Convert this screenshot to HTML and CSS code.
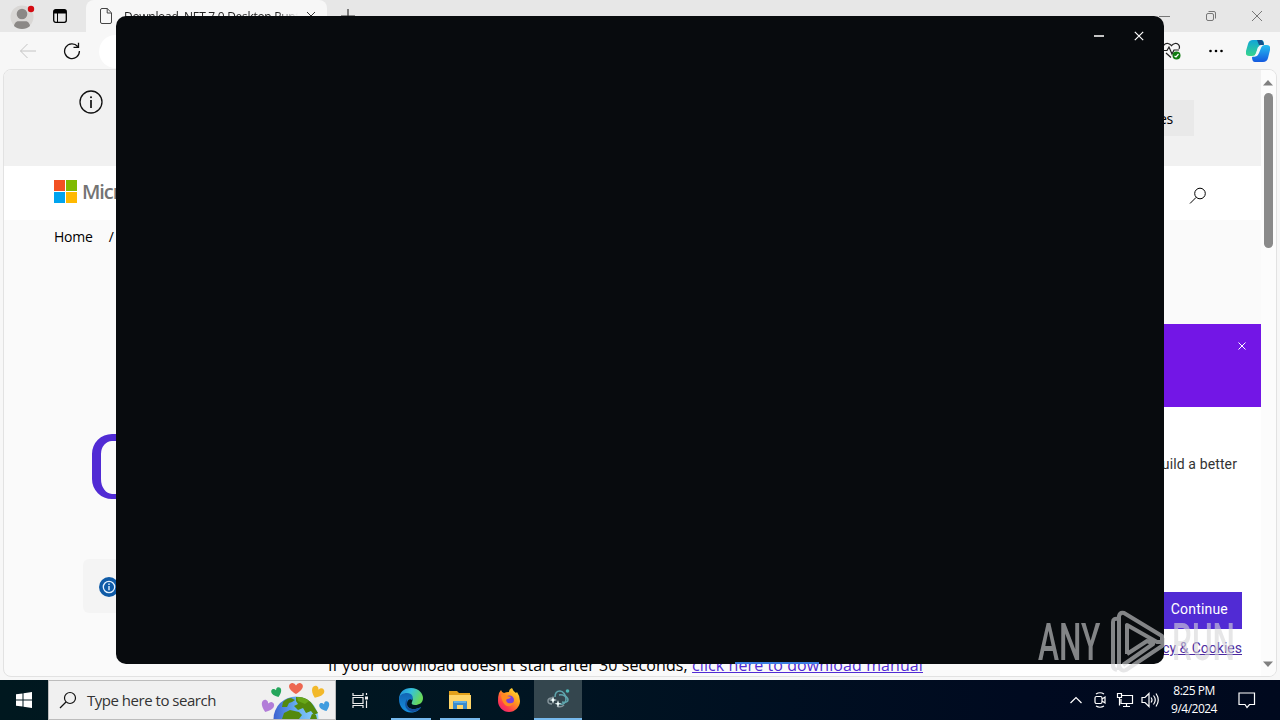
FILE: index.html
```html
<!DOCTYPE html>
<html lang="en">
<head>
    <meta charset="UTF-8">
    <meta name="viewport" content="width=device-width, initial-scale=1.0">
    <title>Desktop</title>
    <link rel="stylesheet" href="styles.css">
</head>
<body>
    <div class="desktop">
        <div class="browser">
            <div class="tabbar">
                <svg class="avatar" width="26" height="28" viewBox="0 0 26 28">
                    <circle cx="12" cy="14" r="11.5" fill="#d9d7d5"/>
                    <circle cx="12" cy="11" r="5.3" fill="#8b8886"/>
                    <path d="M4 23c1-8 15-8 16 0-4 4-12 4-16 0z" fill="#8b8886"/>
                    <path d="M4 17.500h16" stroke="#d9d7d5" stroke-width="1.500"/>
                    <circle cx="21" cy="6" r="3.2" fill="#d40b12"/>
                </svg>
                <svg class="workspaces" width="14" height="14" viewBox="0 0 14 14">
                    <rect x=".7" y=".7" width="12.6" height="12.6" rx="2" fill="none" stroke="#000" stroke-width="1.3"/>
                    <path d="M1 1h12v3.5H1zM4 4h1v9H4z"/>
                </svg>
                <div class="tab">
                    <svg width="12" height="16" viewBox="0 0 12 16" fill="none" stroke="#444">
                        <path d="M.5 2Q.5.5 2 .5h5.2l4.3 4.3V14q0 1.500-1.500 1.500H2Q.5 15.500.5 14zM7.200.5V5h4.300"/>
                    </svg>
                    <span class="tab-title">Download .NET 7.0 Desktop Runt</span>
                    <svg width="10" height="10" viewBox="0 0 10 10" stroke="#333"><path d="M1 1l8 8M9 1L1 9"/></svg>
                </div>
                <svg class="new-tab" width="14" height="14" viewBox="0 0 14 14" stroke="#333"><path d="M7 0v14M0 7h14" stroke-width="1.200"/></svg>
                <div class="window-buttons">
                    <svg width="12" height="12" viewBox="0 0 12 12" stroke="#777"><path d="M0 6.500h11"/></svg>
                    <svg width="12" height="12" viewBox="0 0 12 12" stroke="#777" fill="none"><rect x="1.500" y="3.500" width="7" height="7" rx="1.500"/><path d="M3.500 1.500H9q1.500 0 1.500 1.500v5.500"/></svg>
                    <svg width="12" height="12" viewBox="0 0 12 12" stroke="#777"><path d="M1 1l10 10M11 1L1 11"/></svg>
                </div>
            </div>
            <div class="toolbar">
                <svg width="18" height="16" viewBox="0 0 18 16" fill="none" stroke="#c4c4c4"><path d="M17 8H1.500M8.500 1l-7 7 7 7"/></svg>
                <svg class="reload" width="18" height="18" viewBox="0 0 18 18" fill="none" stroke="#111" stroke-width="1.300"><path d="M14.700 4.500A7.400 7.400 0 1 0 16.400 9M15.500.8v4.500h-5"/></svg>
                <div class="address"></div>
                <svg class="health" width="20" height="18" viewBox="0 0 20 18" fill="none" stroke="#222" stroke-width="1.200">
                    <path d="M1.500 7C0 4 3 1 6 1.500q2 .3 3.500 2.200Q11 1.800 13 1.500c3-.5 5.500 2.500 4 5.500M0 8.500h5l2-3.500 3 7 2-4h5M4 11l5 4.500"/>
                    <circle cx="14.500" cy="13.500" r="4" fill="#107c10" stroke="none"/>
                    <path d="M12.500 14l1.500 1 2.500-3" stroke="#fff"/>
                </svg>
                <svg class="dots" width="14" height="4" viewBox="0 0 14 4"><circle cx="1.500" cy="2" r="1.300"/><circle cx="7" cy="2" r="1.300"/><circle cx="12.500" cy="2" r="1.300"/></svg>
                <svg class="copilot" width="24" height="22" viewBox="0 0 24 22">
                    <defs>
                        <linearGradient id="cpA" x1="0" y1="0" x2="0" y2="1"><stop offset="0" stop-color="#11a5d8"/><stop offset="1" stop-color="#37d58c"/></linearGradient>
                        <linearGradient id="cpB" x1="0" y1="0" x2="0" y2="1"><stop offset="0" stop-color="#26bff0"/><stop offset="1" stop-color="#1459df"/></linearGradient>
                    </defs>
                    <path d="M7 0h8q3 0 3 4l-3 1q-2 0-3 3l-2 6q-1 2-4 2H3q-4 0-3-5l2-7q1-4 5-4z" fill="url(#cpA)"/>
                    <path d="M11 0h4q2 0 3 5h-5z" fill="#14508b"/>
                    <path d="M17 22H9q-3 0-3-5l4-1q2 0 3-3l2-5q1-3 4-3h2q4 0 3 5l-2 8q-1 4-5 4z" fill="url(#cpB)"/>
                    <path d="M12 7l3-1-4 10-4 1q2-1 3-4z" fill="#f2f8fb"/>
                </svg>
            </div>

            <div class="viewport">
                <div class="page">
                    <div class="notice">
                        <svg width="24" height="24" viewBox="0 0 24 24" fill="none" stroke="#111" stroke-width="1.300"><circle cx="12" cy="12" r="11"/><path d="M12 10v8" stroke-width="1.700"/><circle cx="12" cy="7.300" r="1" fill="#111" stroke="none"/></svg>
                        <span class="notice-btn">Yes</span>
                    </div>
                    <div class="site-header">
                        <div class="ms-logo"><i class="red"></i><i class="green"></i><i class="blue"></i><i class="yellow"></i></div>
                        <span class="ms-name">Microsoft</span>
                        <svg class="find" width="18" height="18" viewBox="0 0 18 18" fill="none" stroke="#000"><circle cx="11" cy="6.500" r="5.300"/><path d="M7.200 10.300L1 16.500"/></svg>
                    </div>
                    <div class="breadcrumb"><span>Home</span><span>/</span></div>
                    <div class="hero"></div>
                    <div class="tip">
                        <svg width="20" height="20" viewBox="0 0 20 20"><circle cx="10" cy="10" r="10" fill="#0f5ba7"/><circle cx="10" cy="10" r="5.700" fill="none" stroke="#e3f1ff" stroke-width="1.300"/><path d="M9.300 9h1.400v4.300H9.300zM9.300 6.500h1.400v1.400H9.300z" fill="#e3f1ff"/></svg>
                    </div>
                    <p class="download">If your download doesn't start after 30 seconds, <a>click here to download manual</a></p>
                </div>
                <div class="scrollbar">
                    <svg width="10" height="6" viewBox="0 0 10 6" fill="#808080"><path d="M0 5.500L5 0l5 5.500z"/></svg>
                    <div class="thumb"></div>
                    <svg width="10" height="6" viewBox="0 0 10 6" fill="#808080"><path d="M0 .5L5 6l5-5.500z"/></svg>
                </div>
            </div>

            <div class="survey">
                <div class="survey-head"><svg width="8" height="8" viewBox="0 0 8 8" stroke="#fff"><path d="M.5.5l7 7M7.500.5l-7 7"/></svg></div>
                <div class="survey-text">build a better</div>
                <div class="survey-btn">Continue</div>
                <a class="survey-link">Privacy &amp; Cookies</a>
            </div>
        </div>

        <div class="app-window">
            <svg width="10" height="10" viewBox="0 0 10 10" stroke="#c4c4c4"><path d="M0 5h10" stroke-width="2"/></svg>
            <svg width="10" height="10" viewBox="0 0 10 10" stroke="#fff" stroke-width="1.200"><path d="M.8.8l8.400 8.400M9.200.8L.8 9.200"/></svg>
            <div class="progress"></div>
        </div>

        <div class="watermark">
            <span>ANY</span>
            <svg width="56" height="64" viewBox="0 0 56 64" fill="none" stroke="currentColor" stroke-width="4" stroke-linejoin="round">
                <path d="M9 9Q4 8 4 12v44q0 3 4 4"/>
                <path d="M10 60V6q1-4 5-3l38 23v6h-5L18 15v29M10 56q2 6 7 4l36-24q4-3 1-7M18 44l20-13 6 3-30 21"/>
            </svg>
            <span>RUN</span>
        </div>

        <div class="taskbar">
            <div class="start"><svg width="16" height="16" viewBox="0 0 16 16" fill="#fff"><path d="M0 2.300l6.500-.9v6.100H0zM7.500 1.200L16 0v7.500H7.500zM0 8.500h6.500v6.100L0 13.700zM7.500 8.500H16V16l-8.500-1.200z"/></svg></div>
            <div class="search">
                <svg width="18" height="18" viewBox="0 0 18 18" fill="none" stroke="#111" stroke-width="1.200"><circle cx="11" cy="7" r="5.500"/><path d="M7 11l-6 6"/></svg>
                <span>Type here to search</span>
                <svg class="earth" width="70" height="38" viewBox="0 0 70 38">
                    <defs>
                        <linearGradient id="sea" x1="0" x2="1"><stop offset="0" stop-color="#3d62d0"/><stop offset=".5" stop-color="#65adf0"/><stop offset="1" stop-color="#91d2ff"/></linearGradient>
                        <path id="heart" d="M0 5C-9-1-6-6-3-6Q-1-6 0-3.500Q1-6 3-6C6-6 9-1 0 5z"/>
                    </defs>
                    <circle cx="36" cy="38" r="22.500" fill="url(#sea)"/>
                    <path d="M23 21q4-4 8-4l4 2-3 2-3 1-2 4-5 0zM36 16q11-1 17 8l5 8-4 2-3-4-5 2-3-5-5 2-4-4 4-2-2-3zM22 38l2-6 6-3 9 2 3 3-3 4zM52 33l4 1 1 4h-7z" fill="#53890d"/>
                    <path d="M37 16q7 0 12 4l-4 3-7-3z" fill="#68a719"/>
                    <use href="#heart" transform="translate(36 8) scale(1.150 1)" fill="#ed6650"/>
                    <use href="#heart" transform="translate(17 12) rotate(-20) scale(.85)" fill="#25a65c"/>
                    <use href="#heart" transform="translate(57 12) rotate(25) scale(1.050)" fill="#f2b829"/>
                    <use href="#heart" transform="translate(7 26) rotate(20) scale(1.050)" fill="#b27dd8"/>
                    <use href="#heart" transform="translate(65 26) rotate(-20) scale(.85)" fill="#3f9cdf"/>
                </svg>
            </div>
            <div class="task"><svg width="17" height="17" viewBox="0 0 17 17" fill="none" stroke="#eee" stroke-width="1.200"><path d="M1 1v2.500h10V1M1 16v-2.500h10V16M1 5.500h10v6H1zM14.500 1v2M14.500 8.500V16"/><path d="M13 4.500h3v3h-3z" fill="#eee" stroke="none"/></svg></div>
            <div class="task open edge">
                <svg width="26" height="26" viewBox="0 0 26 26">
                    <defs>
                        <linearGradient id="eA" x1="0" y1="0" x2="1" y2=".4"><stop offset="0" stop-color="#1c86dc"/><stop offset=".5" stop-color="#35c1dc"/><stop offset="1" stop-color="#68d95a"/></linearGradient>
                        <linearGradient id="eB" x1="0" y1="0" x2="0" y2="1"><stop offset="0" stop-color="#1264b4"/><stop offset="1" stop-color="#1590df"/></linearGradient>
                    </defs>
                    <path d="M1 13C1 5 6 1 13 1c8 0 12 6 12 10 0 5-4 7-8 7-3 0-4-1-3-3 2-4-1-7-5-7-4 0-8 4-8 7z" fill="url(#eA)"/>
                    <path d="M1 12c0-4 4-6 8-6 5 0 7 4 5 7-2-2-5 0-5 4 0 5 7 7 14 3-2 4-6 5.500-10 5.500C6 25.500 1 20 1 12z" fill="url(#eB)"/>
                    <path d="M9 12c-4 6-1 12 6 13 4-.5 7-2.500 8-5-7 4-14 2-14-3z" fill="#154f9b"/>
                </svg>
            </div>
            <div class="task open">
                <svg width="22" height="20" viewBox="0 0 22 20"><path d="M0 1h8l2 2h11v6H0z" fill="#e3a11a"/><path d="M0 5h22v14H0z" fill="#ffd568"/><path d="M4 19v-7q0-1 1-1h12q1 0 1 1v7h-4v-4H8v4z" fill="#3c8ccc"/><path d="M5 13h12v-2H5z" fill="#60afe5"/></svg>
            </div>
            <div class="task">
                <svg width="24" height="24" viewBox="0 0 24 24">
                    <defs><linearGradient id="fx" x1="1" y1="0" x2=".2" y2="1"><stop offset="0" stop-color="#fff13a"/><stop offset=".45" stop-color="#ff9a1e"/><stop offset=".8" stop-color="#ff3950"/><stop offset="1" stop-color="#e72575"/></linearGradient></defs>
                    <path d="M2 5l2-3q1 3 3 3 2-1 5-1 0-3 3-4 1 3 4 5l1-1q3 4 3 9c0 6-5 11-11 11S1 19 1 13q0-5 1-8z" fill="url(#fx)"/>
                    <circle cx="12.500" cy="12" r="4.500" fill="#7941dc"/>
                    <path d="M4 7q4-1 6 1l4 1q-1 2-4 2-2 2 1 4 3 1 6-1-2 5-7 4-5-2-6-11z" fill="#ff8a1f"/>
                </svg>
            </div>
            <div class="task active">
                <svg width="24" height="22" viewBox="0 0 24 22" fill="none" stroke="#5fa5ad" stroke-width="1.500">
                    <path d="M9 9C9 5 11 3 14 3s6 4 6 8-3 6-6 5"/>
                    <path d="M13 7c4-1 9 2 9 5 0 2-3 3-6 2"/>
                    <path d="M6 10q-4 0-4 3 0 3 4 3M11 18q4 2 7-1" stroke="#84939a"/>
                    <path d="M7 8l1 3.200 3 .8-3 .8L7 16l-1-3.200-3-.8 3-.8zM12 12l.9 3 2.600.8-2.600.8-.9 3-.9-3-2.600-.8 2.600-.8z" fill="#f2ffff" stroke="none"/>
                    <circle cx="21.500" cy="3" r="1.800" fill="#4eb9b8" stroke="none"/>
                </svg>
            </div>
            <div class="tray">
                <svg width="12" height="8" viewBox="0 0 12 8"><path d="M.5 7L6 1.500 11.500 7"/></svg>
                <svg class="meet" width="14" height="16" viewBox="0 0 14 16"><rect x="2" y="4.500" width="7" height="7" rx="1.500"/><path d="M9 7l3-2v6L9 9M3 2q4-2.500 8 0M3 14q4 2.500 8 0"/></svg>
                <svg width="18" height="16" viewBox="0 0 18 16"><path d="M6 3.500h10.500v8H5V7M10.500 11.500v3M7 14.500h7M1.500 1.500h4v4h-4zM3.500 5.500v8"/></svg>
                <svg width="18" height="16" viewBox="0 0 18 16"><path d="M1 5.500h3l4-4v13l-4-4H1zM10 5.500q2 2.500 0 5M12.500 3.500q3.500 4.500 0 9M15 1.500q4.500 6.500 0 13"/></svg>
                <div class="clock">8:25 PM<br>9/4/2024</div>
                <svg width="18" height="17" viewBox="0 0 18 17"><path d="M1 1h15.500v11.500h-5L9 15.500l-2-3H1z"/></svg>
            </div>
        </div>
    </div>
</body>
</html>
```
FILE: styles.css
```css
* {
    box-sizing: border-box;
}
body {
    margin: 0;
    font-family: "Open Sans", "Noto Sans", sans-serif;
    overflow: hidden;
}
svg {
    display: block;
    flex-shrink: 0;
}
.desktop {
    position: relative;
    width: 1280px;
    height: 720px;
    overflow: hidden;
    background: #eceff3;
}
.browser {
    position: relative;
    height: 680px;
    background: #f7f7f7;
    display: flex;
    flex-direction: column;
}
.tabbar {
    height: 32px;
    display: flex;
    align-items: center;
    background: #e7e7e7;
}
.avatar {
    margin: 2px 0 0 10px;
}
.workspaces {
    margin-left: 17px;
}
.tab {
    width: 241px;
    height: 32px;
    margin-left: 19px;
    padding: 0 10px 0 14px;
    display: flex;
    align-items: center;
    background: #f7f7f7;
    border-radius: 8px 8px 0 0;
}
.tab-title {
    width: 174px;
    margin: 0 8px 0 12px;
    font-size: 12px;
    letter-spacing: -0.3px;
    white-space: nowrap;
    color: #222;
    mask-image: linear-gradient(to right, #000 88%, transparent);
}
.new-tab {
    margin-left: 14px;
}
.window-buttons {
    display: flex;
    gap: 34px;
    margin: 0 17px 0 auto;
}
.toolbar {
    height: 37px;
    display: flex;
    align-items: center;
    padding: 1px 10px 0 19px;
}
.reload {
    margin-left: 26px;
}
.address {
    width: 1040px;
    height: 33px;
    margin-left: 18px;
    background: #fff;
    border-radius: 17px;
}
.health {
    margin-left: 23px;
}
.dots {
    margin-left: 27px;
}
.copilot {
    margin-left: auto;
}
.viewport {
    height: 608px;
    margin: 0 3px 0 3px;
    display: flex;
    background: #fafafa;
    border: 1px solid #e2e2e2;
    border-radius: 8px;
    overflow: hidden;
}
.page {
    width: 1257px;
    display: flex;
    flex-direction: column;
}
.notice {
    height: 96px;
    flex-shrink: 0;
    background: #f1f1f1;
    display: flex;
    align-items: flex-start;
    padding: 20px 67px 0 75px;
}
.notice-btn {
    width: 100px;
    height: 36px;
    margin: 10px 0 0 auto;
    padding-right: 21px;
    background: #e9e9e9;
    font-size: 14px;
    line-height: 37px;
    letter-spacing: -0.3px;
    text-align: right;
}
.site-header {
    height: 54px;
    flex-shrink: 0;
    background: #fff;
    display: flex;
    align-items: center;
    padding: 0 54px 3px 50px;
}
.ms-logo {
    display: grid;
    grid-template-columns: 11px 11px;
    grid-template-rows: 11px 11px;
    gap: 1px;
}
.red { background: #f25022; }
.green { background: #7fba00; }
.blue { background: #00a4ef; }
.yellow { background: #ffb900; }
.ms-name {
    margin-left: 5px;
    font-size: 20px;
    font-weight: 600;
    letter-spacing: -1.1px;
    color: #737373;
}
.find {
    margin: 9px 0 0 auto;
}
.breadcrumb {
    height: 34px;
    flex-shrink: 0;
    padding: 0 0 2px 50px;
    display: flex;
    gap: 16px;
    align-items: center;
    font-size: 14px;
    letter-spacing: -0.2px;
}
.hero {
    width: 120px;
    height: 65px;
    flex-shrink: 0;
    margin: 180px 0 0 88px;
    border: solid #512bd4;
    border-width: 7px 9px 5px;
    border-radius: 20px;
}
.tip {
    width: 900px;
    height: 54px;
    flex-shrink: 0;
    margin: 60px 0 0 79px;
    padding: 2px 0 0 16px;
    display: flex;
    align-items: center;
    background: #f4f4f4;
    border-radius: 6px;
}
.download {
    margin: 40px 0 0 324px;
    font-size: 16px;
    line-height: 24px;
    letter-spacing: 0.09px;
    white-space: nowrap;
}
.download a {
    color: #512bd4;
    text-decoration: underline;
}
.scrollbar {
    width: 15px;
    padding: 10px 1px 9px 0;
    background: #fcfcfc;
    display: flex;
    flex-direction: column;
    align-items: center;
}
.thumb {
    width: 9px;
    height: 155px;
    margin: 7px 0 auto;
    background: #8a8a8a;
    border-radius: 5px;
}
/* feedback dialog in the lower right corner of the page */
.survey {
    position: absolute;
    left: 1000px;
    top: 324px;
    width: 261px;
    height: 352px;
    background: #fff;
    display: flex;
    flex-direction: column;
    align-items: flex-end;
    font-family: Roboto, sans-serif;
    font-size: 14px;
}
.survey-head {
    width: 100%;
    height: 83px;
    padding: 18px 15px 0;
    background: #7316e6;
    display: flex;
    justify-content: flex-end;
}
.survey-text {
    margin: 45px 24px 0;
    line-height: 24px;
    letter-spacing: 0.12px;
    color: #333;
}
.survey-btn {
    width: 110px;
    height: 37px;
    margin: 116px 19px 0;
    padding-right: 14px;
    background: #512bd4;
    color: #fff;
    line-height: 35px;
    letter-spacing: 0.2px;
    text-align: right;
}
.survey-link {
    margin: 10px 19px 0;
    line-height: 18px;
    color: #4b2aa0;
    text-decoration: underline;
}
.app-window {
    position: absolute;
    left: 116px;
    top: 16px;
    width: 1048px;
    height: 648px;
    padding: 15px 20px 0;
    display: flex;
    justify-content: flex-end;
    gap: 30px;
    background: #080b0e;
    border-radius: 10px;
}
.progress {
    position: absolute;
    left: 619px;
    bottom: 0;
    width: 84px;
    height: 2px;
    background: #3a7de0;
}
.watermark {
    position: absolute;
    left: 1038px;
    top: 609px;
    display: flex;
    align-items: center;
    gap: 7px;
    color: #d6d6d8;
    opacity: 0.6;
    font-family: Roboto, sans-serif;
    font-size: 51px;
    font-weight: 500;
    line-height: 64px;
}
.watermark span {
    width: 64px;
    padding-top: 2px;
    transform: scaleX(0.62);
    transform-origin: left;
}
.taskbar {
    height: 40px;
    display: flex;
    align-items: center;
    background: linear-gradient(to right, #00181f, #001522 40%, #000a20 80%, #00091e);
}
.start {
    width: 48px;
    display: flex;
    justify-content: center;
}
.search {
    width: 288px;
    height: 40px;
    padding: 0 5px 0 10px;
    display: flex;
    align-items: center;
    background: #f0f0f0;
    border: 1px solid #bcbcbc;
    font-size: 15px;
    letter-spacing: -0.48px;
    color: #333;
}
.search span {
    margin-left: 10px;
    white-space: nowrap;
}
.earth {
    margin-left: auto;
}
.task {
    width: 48px;
    height: 40px;
    margin-right: 1px;
    display: flex;
    align-items: center;
    justify-content: center;
}
.open {
    background: linear-gradient(#76b9ed, #76b9ed) center bottom / 40px 2px no-repeat;
}
.edge {
    margin-left: 2px;
}
.active {
    background: #34464e;
    border-bottom: 2px solid #76b9ed;
}
.tray {
    margin: 0 24px 0 auto;
    display: flex;
    align-items: center;
    gap: 7px;
}
.tray svg {
    fill: none;
    stroke: #fff;
    stroke-width: 1.2;
}
.tray .meet {
    margin: 0 2px 0 4px;
}
.clock {
    width: 54px;
    margin: 0 10px 0 1px;
    color: #fff;
    font-size: 12px;
    line-height: 18px;
    letter-spacing: -0.5px;
    text-align: center;
}
```
